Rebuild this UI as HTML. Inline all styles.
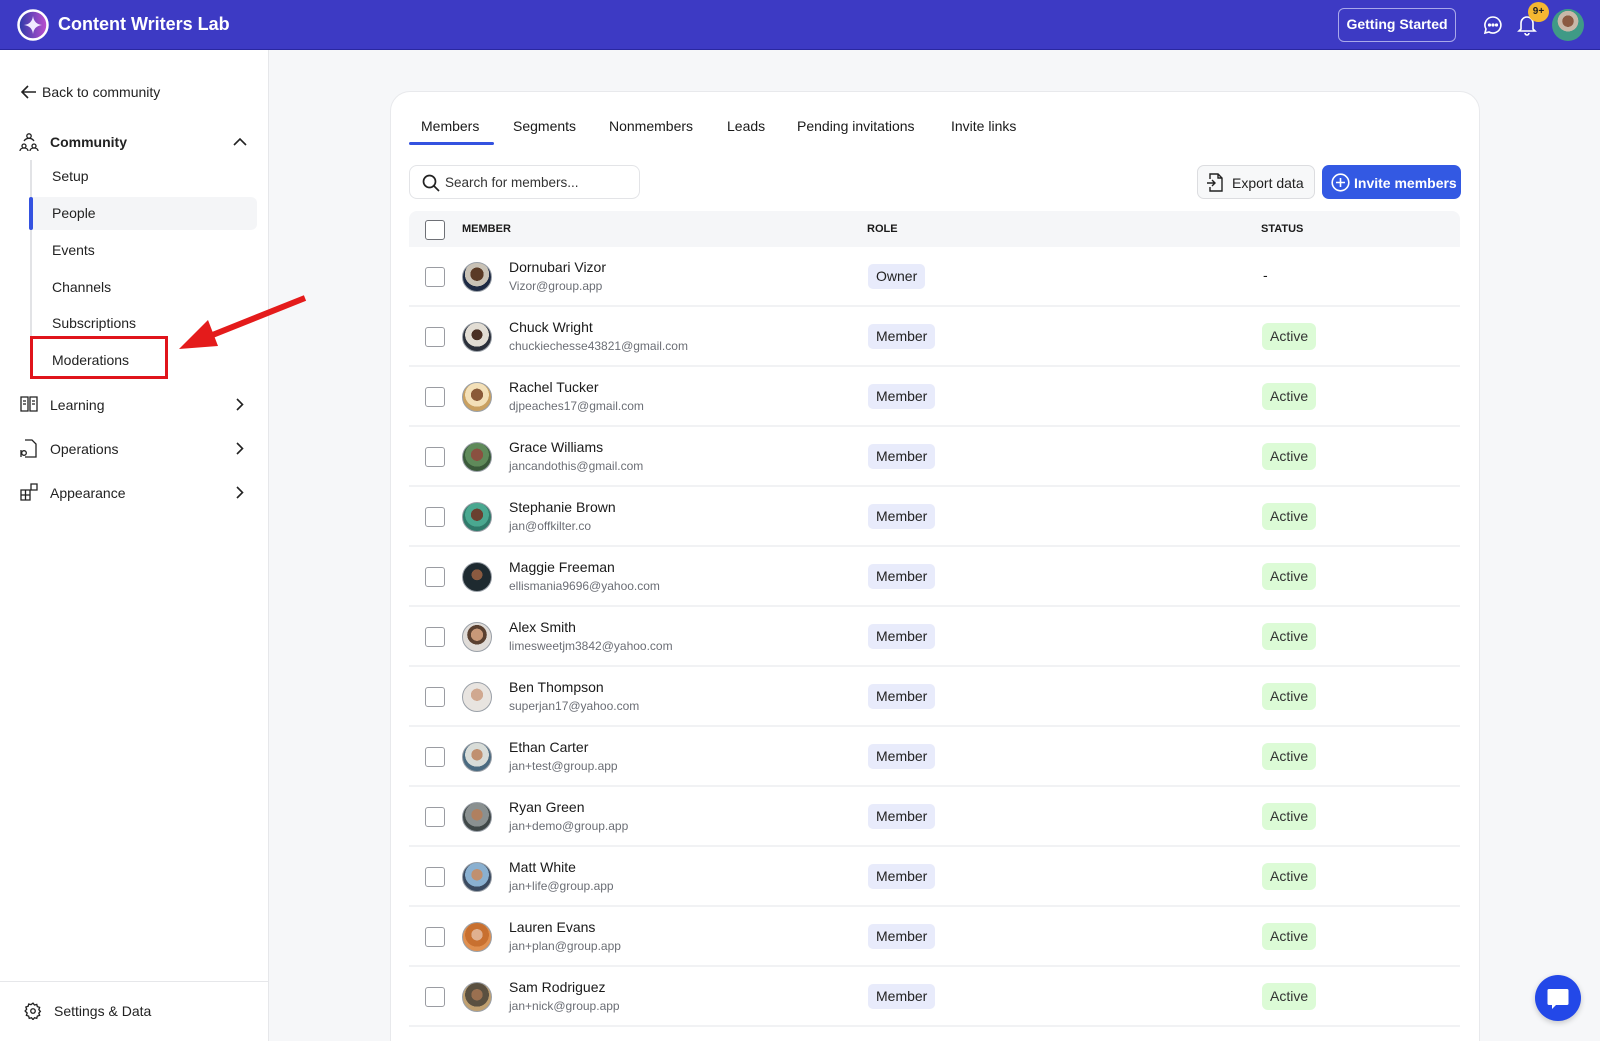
<!DOCTYPE html>
<html style="width:1600px;height:1041px;overflow:hidden"><head><meta charset="utf-8"><style>
*{box-sizing:border-box;margin:0;padding:0}
body{width:1600px;height:1041px;overflow:hidden;background:#f6f7f9;font-family:"Liberation Sans",sans-serif;color:#1a1a1a;position:relative}
.a{position:absolute}
.hdr{left:0;top:0;width:1600px;height:50px;background:#3d3ac4;border-bottom:1px solid #2a27a0}
.side{left:0;top:50px;width:269px;height:991px;background:#fff;border-right:1px solid #e6e7ea}
.card{left:390px;top:91px;width:1090px;height:950px;background:#fff;border:1px solid #e8e9ec;border-bottom:none;border-radius:20px 20px 0 0}
.tab{top:118px;font-size:14px;color:#1a1a1a}
.nav{font-size:14px;color:#222}
.sub{left:52px;font-size:14px;color:#222}
.row{left:409px;width:1051px;height:60px;border-bottom:2px solid #f1f2f4}
.cb{position:absolute;left:16px;top:20px;width:20px;height:20px;border:1.5px solid #9a9ca2;border-radius:3px;background:#fff}
.av{position:absolute;left:53px;top:15px;width:30px;height:30px;border-radius:50%;border:1.5px solid #9aa0a8}
.nm{position:absolute;left:100px;top:12px;font-size:14px;color:#1a1a1a}
.em{position:absolute;left:100px;top:32px;font-size:12px;color:#6b6e75}
.role{position:absolute;left:459px;top:17px;height:25px;line-height:25px;padding:0 8px;background:#e8ebfb;border-radius:5px;font-size:14px;color:#222}
.st{position:absolute;left:853px;top:16px;height:27px;line-height:27px;padding:0 8px;background:#dcfbd6;border-radius:6px;font-size:14px;color:#333}
</style></head><body>
<div class="a hdr">
 <svg class="a" style="left:17px;top:9px" width="32" height="32" viewBox="0 0 32 32"><defs><linearGradient id="g" x1="0" x2="1"><stop offset="0" stop-color="#2a3aa8"/><stop offset="1" stop-color="#c04fd0"/></linearGradient></defs><circle cx="16" cy="16" r="14.5" fill="url(#g)" stroke="#fff" stroke-width="2.5"/><path d="M16 7 Q17 15 25 16 Q17 17 16 25 Q15 17 7 16 Q15 15 16 7Z" fill="#f0eaff"/></svg>
 <div class="a" style="left:58px;top:14px;font-size:18px;font-weight:bold;color:#fff">Content Writers Lab</div>
 <div class="a" style="left:1338px;top:8px;width:118px;height:34px;border:1.5px solid #a9a8ea;border-radius:6px;color:#fff;font-size:14px;font-weight:bold;text-align:center;line-height:31px">Getting Started</div>
 <svg class="a" style="left:1483px;top:15px" width="20" height="20" viewBox="0 0 20 20" fill="none" stroke="#fff" stroke-width="1.6"><path d="M10 2a8 8 0 1 1-4 15l-4 1 1-4A8 8 0 0 1 10 2z"/><circle cx="6.5" cy="10" r=".8" fill="#fff"/><circle cx="10" cy="10" r=".8" fill="#fff"/><circle cx="13.5" cy="10" r=".8" fill="#fff"/></svg>
 <svg class="a" style="left:1517px;top:14px" width="20" height="22" viewBox="0 0 20 22" fill="none" stroke="#fff" stroke-width="1.6"><path d="M4 15V9a6 6 0 0 1 12 0v6l2 2H2z"/><path d="M8 19a2 2 0 0 0 4 0"/></svg>
 <div class="a" style="left:1528px;top:2px;width:21px;height:20px;border-radius:50%;background:#f5b731;color:#222;font-size:10px;font-weight:bold;text-align:center;line-height:20px">9+</div>
 <div class="a" style="left:1552px;top:9px;width:32px;height:32px;border-radius:50%;background:radial-gradient(circle at 50% 38%,#8a5a42 0 22%,#c8b8a8 23% 40%,#3f9a86 41%)"></div>
</div>
<div class="a side">
 <svg class="a" style="left:21px;top:35px" width="16" height="14" viewBox="0 0 16 14" fill="none" stroke="#222" stroke-width="1.6"><path d="M15 7H2M7 1 1 7l6 6"/></svg>
 <div class="a nav" style="left:42px;top:34px">Back to community</div>
 <svg class="a" style="left:19px;top:82px" width="20" height="20" viewBox="0 0 20 20" fill="none" stroke="#222" stroke-width="1.3"><circle cx="10" cy="4" r="2.2"/><circle cx="5" cy="14" r="2"/><circle cx="15" cy="14" r="2"/><path d="M1 19c0-2 2-3 4-3s4 1 4 3M11 19c0-2 2-3 4-3s4 1 4 3M5 9a6 6 0 0 1 10 0"/></svg>
 <div class="a nav" style="left:50px;top:84px;font-weight:bold">Community</div>
 <svg class="a" style="left:233px;top:87px" width="14" height="9" viewBox="0 0 14 9" fill="none" stroke="#222" stroke-width="1.6"><path d="M1 8l6-6 6 6"/></svg>
 <div class="a" style="left:30px;top:110px;width:2px;height:218px;background:#e2e3e6"></div>
 <div class="a" style="left:30px;top:147px;width:227px;height:33px;background:#f4f5f7;border-radius:0 6px 6px 0"></div>
 <div class="a" style="left:29px;top:147px;width:4px;height:33px;background:#3452e0;border-radius:2px"></div>
 <div class="a sub" style="top:118px">Setup</div>
 <div class="a sub" style="top:155px">People</div>
 <div class="a sub" style="top:192px">Events</div>
 <div class="a sub" style="top:229px">Channels</div>
 <div class="a sub" style="top:265px">Subscriptions</div>
 <div class="a sub" style="top:302px">Moderations</div>
 <div class="a" style="left:30px;top:286px;width:138px;height:43px;border:3px solid #e0141b"></div>
 <svg class="a" style="left:20px;top:346px" width="18" height="16" viewBox="0 0 18 16" fill="none" stroke="#222" stroke-width="1.3"><path d="M1 1h7v14H1zM10 1h7v14h-7zM3 5h3M3 8h3M12 5h3M12 8h3"/></svg>
 <div class="a nav" style="left:50px;top:347px">Learning</div>
 <div class="a nav" style="left:50px;top:391px">Operations</div>
 <svg class="a" style="left:20px;top:389px" width="17" height="19" viewBox="0 0 17 19" fill="none" stroke="#222" stroke-width="1.3"><path d="M5 1h7l4 4v13H5M1 11v7"/><circle cx="4" cy="14" r="2.3"/></svg>
 <div class="a nav" style="left:50px;top:435px">Appearance</div>
 <svg class="a" style="left:20px;top:433px" width="18" height="18" viewBox="0 0 18 18" fill="none" stroke="#222" stroke-width="1.3"><path d="M1 7h9v10H1zM1 12h9M5.5 7v10M11 1h6v6h-6z"/></svg>
 <svg class="a" style="left:236px;top:348px" width="8" height="13" viewBox="0 0 8 13" fill="none" stroke="#222" stroke-width="1.6"><path d="M1 1l5.5 5.5L1 12"/></svg>
 <svg class="a" style="left:236px;top:392px" width="8" height="13" viewBox="0 0 8 13" fill="none" stroke="#222" stroke-width="1.6"><path d="M1 1l5.5 5.5L1 12"/></svg>
 <svg class="a" style="left:236px;top:436px" width="8" height="13" viewBox="0 0 8 13" fill="none" stroke="#222" stroke-width="1.6"><path d="M1 1l5.5 5.5L1 12"/></svg>
 <div class="a" style="left:0;top:931px;width:269px;height:1px;background:#e6e7ea"></div>
 <svg class="a" style="left:24px;top:952px" width="18" height="18" viewBox="0 0 24 24" fill="none" stroke="#222" stroke-width="1.8"><circle cx="12" cy="12" r="3"/><path d="M12 1.5l2 2.5 3-.8.8 3 3 1-1 3 2 2.3-2 2.3 1 3-3 1-.8 3-3-.8-2 2.5-2-2.5-3 .8-.8-3-3-1 1-3L1.5 12l2-2.3-1-3 3-1 .8-3 3 .8z"/></svg>
 <div class="a nav" style="left:54px;top:953px">Settings &amp; Data</div>
</div>
<svg class="a" style="left:170px;top:290px" width="140" height="70" viewBox="0 0 140 70"><path d="M135 8 L30 50" stroke="#e41b1b" stroke-width="6"/><path d="M9 59 L38 30 L48 56Z" fill="#e41b1b"/></svg>
<div class="a card"></div>
<div class="a tab" style="left:421px">Members</div>
<div class="a tab" style="left:513px">Segments</div>
<div class="a tab" style="left:609px">Nonmembers</div>
<div class="a tab" style="left:727px">Leads</div>
<div class="a tab" style="left:797px">Pending invitations</div>
<div class="a tab" style="left:951px">Invite links</div>
<div class="a" style="left:409px;top:142px;width:85px;height:3px;background:#3452e0;border-radius:2px"></div>
<div class="a" style="left:409px;top:165px;width:231px;height:34px;border:1px solid #e3e4e7;border-radius:8px"></div>
<svg class="a" style="left:422px;top:174px" width="18" height="18" viewBox="0 0 18 18" fill="none" stroke="#222" stroke-width="1.7"><circle cx="7.5" cy="7.5" r="6"/><path d="M12 12l5 5"/></svg>
<div class="a" style="left:445px;top:175px;font-size:13.5px;color:#333">Search for members...</div>
<div class="a" style="left:1197px;top:165px;width:118px;height:34px;border:1px solid #dcdde0;border-radius:7px;background:#f7f8f9"></div>
<svg class="a" style="left:1206px;top:173px" width="18" height="19" viewBox="0 0 18 19" fill="none" stroke="#222" stroke-width="1.4"><path d="M4 6V1h8l4 4v13H4v-4M12 1v4h4M1 10h8M6 7l3 3-3 3"/></svg>
<div class="a" style="left:1232px;top:175px;font-size:14px;color:#222">Export data</div>
<div class="a" style="left:1322px;top:165px;width:139px;height:34px;border-radius:7px;background:#3359e3"></div>
<svg class="a" style="left:1331px;top:173px" width="19" height="19" viewBox="0 0 19 19" fill="none" stroke="#fff" stroke-width="1.6"><circle cx="9.5" cy="9.5" r="8.3"/><path d="M9.5 5v9M5 9.5h9"/></svg>
<div class="a" style="left:1354px;top:175px;font-size:14px;font-weight:bold;color:#fff">Invite members</div>
<div class="a" style="left:409px;top:211px;width:1051px;height:36px;background:#f5f6f8;border-radius:8px 8px 0 0"></div>
<div class="a" style="left:425px;top:220px;width:20px;height:20px;border:1.5px solid #6e7076;border-radius:3px;background:#fff"></div>
<div class="a" style="left:462px;top:223px;font-size:11px;font-weight:bold">MEMBER</div>
<div class="a" style="left:867px;top:223px;font-size:11px;font-weight:bold">ROLE</div>
<div class="a" style="left:1261px;top:223px;font-size:11px;font-weight:bold">STATUS</div>

<div class="a row" style="top:247px"><div class="cb"></div><div class="av" style="background:radial-gradient(circle at 50% 40%,#5a3a26 0 30%,#c9c2b6 31% 55%,#1d2a44 56%)"></div><div class="nm">Dornubari Vizor</div><div class="em">Vizor@group.app</div><div class="role">Owner</div><div class="a" style="left:854px;top:20px;font-size:14px">-</div></div>
<div class="a row" style="top:307px"><div class="cb"></div><div class="av" style="background:radial-gradient(circle at 50% 42%,#4a3024 0 25%,#e2ddd4 26% 55%,#2a2f3a 56%)"></div><div class="nm">Chuck Wright</div><div class="em">chuckiechesse43821@gmail.com</div><div class="role">Member</div><div class="st">Active</div></div>
<div class="a row" style="top:367px"><div class="cb"></div><div class="av" style="background:radial-gradient(circle at 50% 42%,#8a5a38 0 28%,#f3e0b8 29% 55%,#c9a060 56%)"></div><div class="nm">Rachel Tucker</div><div class="em">djpeaches17@gmail.com</div><div class="role">Member</div><div class="st">Active</div></div>
<div class="a row" style="top:427px"><div class="cb"></div><div class="av" style="background:radial-gradient(circle at 50% 42%,#8a5040 0 28%,#5f8a5a 29% 55%,#3a5a3a 56%)"></div><div class="nm">Grace Williams</div><div class="em">jancandothis@gmail.com</div><div class="role">Member</div><div class="st">Active</div></div>
<div class="a row" style="top:487px"><div class="cb"></div><div class="av" style="background:radial-gradient(circle at 50% 42%,#6a4030 0 28%,#4aa890 29% 55%,#2f7a6a 56%)"></div><div class="nm">Stephanie Brown</div><div class="em">jan@offkilter.co</div><div class="role">Member</div><div class="st">Active</div></div>
<div class="a row" style="top:547px"><div class="cb"></div><div class="av" style="background:radial-gradient(circle at 50% 42%,#8a5a40 0 25%,#1e2a30 26%)"></div><div class="nm">Maggie Freeman</div><div class="em">ellismania9696@yahoo.com</div><div class="role">Member</div><div class="st">Active</div></div>
<div class="a row" style="top:607px"><div class="cb"></div><div class="av" style="background:radial-gradient(circle at 50% 42%,#c89878 0 28%,#5a4030 29% 45%,#e0dcd8 46%)"></div><div class="nm">Alex Smith</div><div class="em">limesweetjm3842@yahoo.com</div><div class="role">Member</div><div class="st">Active</div></div>
<div class="a row" style="top:667px"><div class="cb"></div><div class="av" style="background:radial-gradient(circle at 50% 42%,#d0a890 0 28%,#e8e4e0 29%)"></div><div class="nm">Ben Thompson</div><div class="em">superjan17@yahoo.com</div><div class="role">Member</div><div class="st">Active</div></div>
<div class="a row" style="top:727px"><div class="cb"></div><div class="av" style="background:radial-gradient(circle at 50% 42%,#c09070 0 26%,#d8dcd8 27% 55%,#4a6a80 56%)"></div><div class="nm">Ethan Carter</div><div class="em">jan+test@group.app</div><div class="role">Member</div><div class="st">Active</div></div>
<div class="a row" style="top:787px"><div class="cb"></div><div class="av" style="background:radial-gradient(circle at 50% 42%,#b08060 0 26%,#8a9090 27% 55%,#404848 56%)"></div><div class="nm">Ryan Green</div><div class="em">jan+demo@group.app</div><div class="role">Member</div><div class="st">Active</div></div>
<div class="a row" style="top:847px"><div class="cb"></div><div class="av" style="background:radial-gradient(circle at 50% 42%,#c09070 0 26%,#8ab0d0 27% 55%,#3a4a60 56%)"></div><div class="nm">Matt White</div><div class="em">jan+life@group.app</div><div class="role">Member</div><div class="st">Active</div></div>
<div class="a row" style="top:907px"><div class="cb"></div><div class="av" style="background:radial-gradient(circle at 50% 42%,#e0b090 0 26%,#c87030 27% 55%,#e09050 56%)"></div><div class="nm">Lauren Evans</div><div class="em">jan+plan@group.app</div><div class="role">Member</div><div class="st">Active</div></div>
<div class="a row" style="top:967px"><div class="cb"></div><div class="av" style="background:radial-gradient(circle at 50% 42%,#9a7050 0 26%,#5a5040 27% 55%,#c0a070 56%)"></div><div class="nm">Sam Rodriguez</div><div class="em">jan+nick@group.app</div><div class="role">Member</div><div class="st">Active</div></div>
<div class="a" style="left:409px;top:1027px;width:1051px;height:14px;border-top:0;background:#fff"></div>
<div class="a" style="left:1535px;top:975px;width:46px;height:46px;border-radius:50%;background:#2348e8;box-shadow:0 2px 6px rgba(0,0,0,.2)"></div>
<svg class="a" style="left:1546px;top:987px" width="24" height="24" viewBox="0 0 24 24"><path d="M3 2h18a1.5 1.5 0 0 1 1.5 1.5v13A1.5 1.5 0 0 1 21 18H10l-4 4v-4H3a1.5 1.5 0 0 1-1.5-1.5v-13A1.5 1.5 0 0 1 3 2z" fill="#fff"/></svg>
</body></html>
